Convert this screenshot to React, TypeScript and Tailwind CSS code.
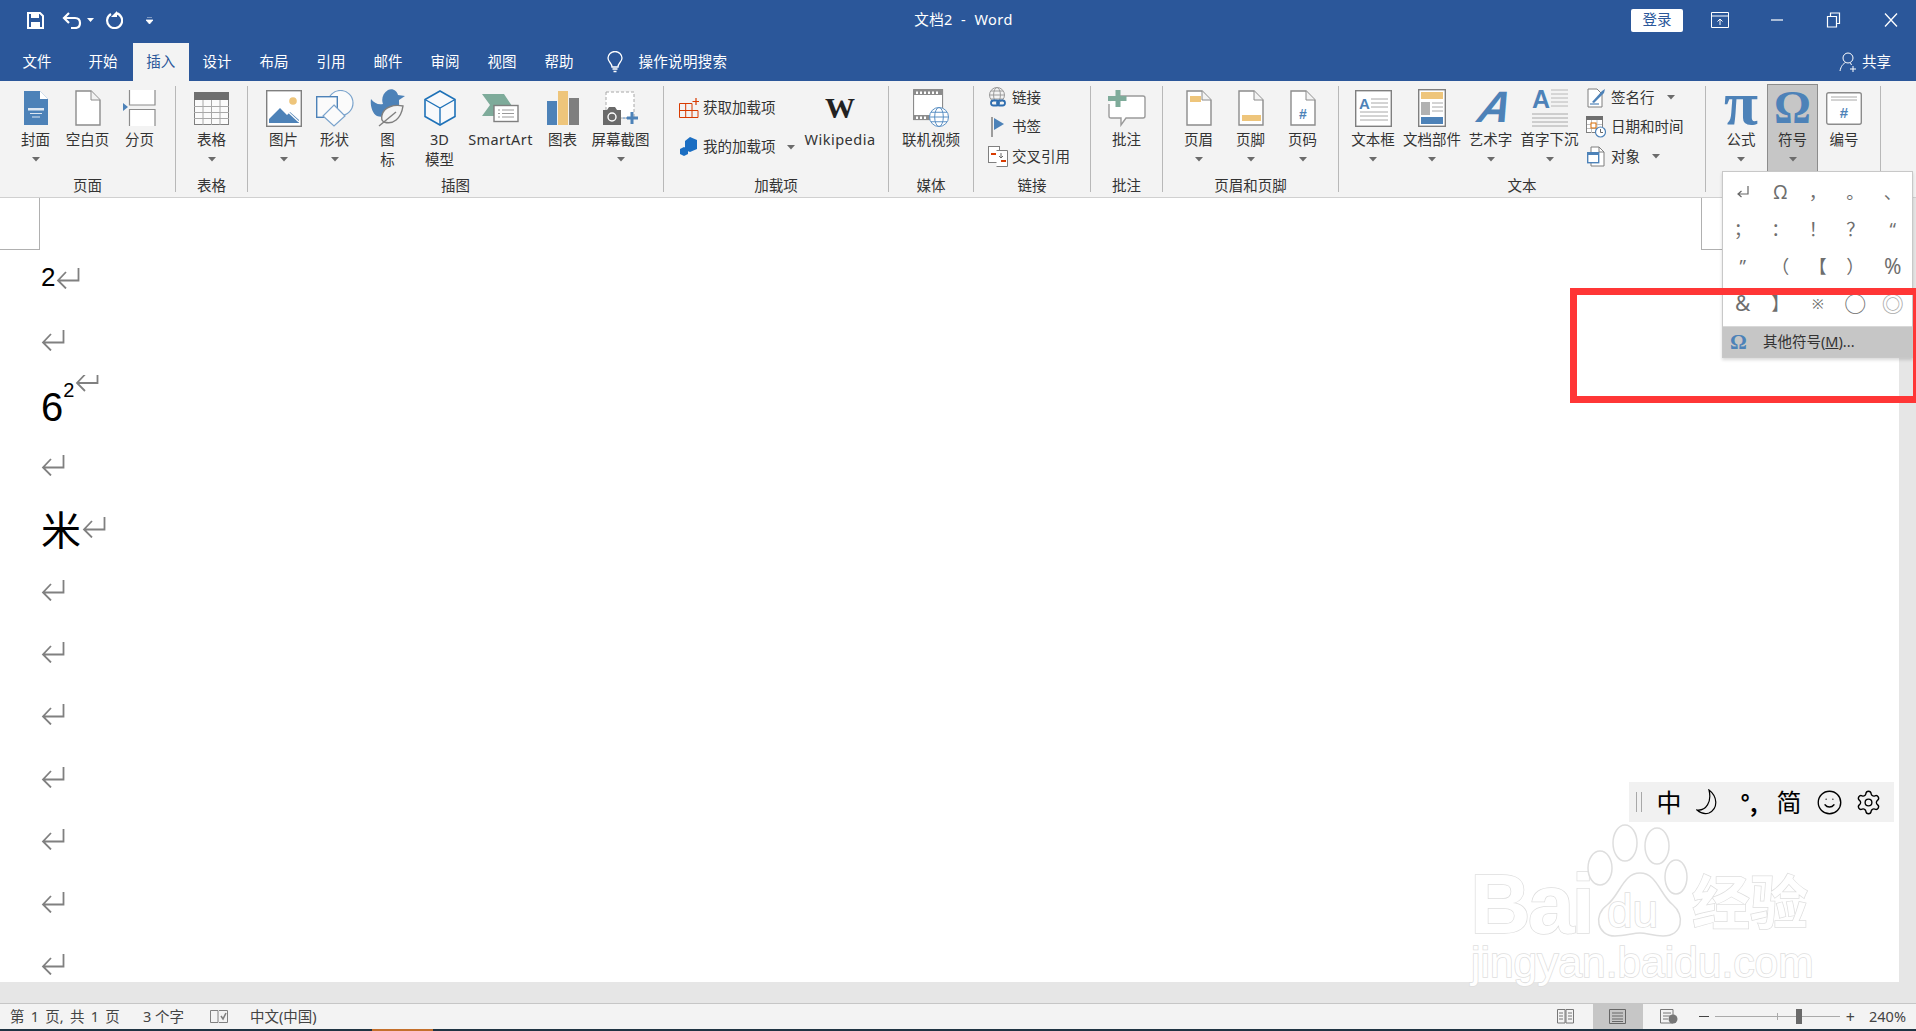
import type { ReactNode } from "react";
import { Settings, Smile } from "lucide-react";

const BLUE = "#4d82b8";
const TAN = "#eec57b";
const GRAY = "#7f7f7f";

function Caret() {
  return (
    <svg width="8" height="5" viewBox="0 0 8 5">
      <path d="M0 0H8L4 4.5Z" fill="#6b6b6b" />
    </svg>
  );
}

function ReturnMark({ h = 21 }: { h?: number }) {
  const y = h === 21 ? 12.5 : 8;
  return (
    <svg width="24" height={h} viewBox={`0 0 24 ${h}`} className="shrink-0">
      <path
        d={`M22.5 0V${y}H2M10 ${y - 8.5}L2 ${y}L10 ${y + 8}`}
        fill="none"
        stroke="#808080"
        strokeWidth="1.8"
      />
    </svg>
  );
}

function DocShape({ children }: { children?: ReactNode }) {
  return (
    <svg width="26" height="36" viewBox="0 0 26 36">
      <path d="M1 1H16L25 10V35H1Z" fill="#fff" stroke="#8c8c8c" strokeWidth="1.4" />
      <path d="M16 1V10H25" fill="#f3f3f3" stroke="#8c8c8c" />
      {children}
    </svg>
  );
}

function CoverIcon() {
  return (
    <svg width="26" height="35" viewBox="0 0 26 35">
      <path d="M1 0H17L25 8V34H1Z" fill={BLUE} />
      <path d="M17 0L25 8H17Z" fill="#fff" />
      <path d="M5 17H21V19.5H5ZM7 22H19V23H7ZM9 25.5H17V26.5H9Z" fill="#dfe8f2" />
    </svg>
  );
}

function BreakIcon() {
  return (
    <svg width="33" height="36" viewBox="0 0 33 36">
      <path d="M6.5 0V15H32V0" fill="#fff" stroke="#8c8c8c" strokeWidth="1.2" />
      <path d="M6.5 36V19.5H32V36" fill="#fff" stroke="#8c8c8c" strokeWidth="1.2" />
      <path d="M0 13L5 17L0 21Z" fill={BLUE} />
    </svg>
  );
}

function TableIcon() {
  return (
    <svg width="35" height="33" viewBox="0 0 35 33">
      <rect x="0.5" y="0.5" width="34" height="32" fill="#fbfbfb" stroke={GRAY} />
      <rect x="0" y="0" width="35" height="8" fill="#6e6e6e" />
      <path d="M0 14.5H35M0 20.5H35M0 26.5H35M9 8V33M17.5 8V33M26 8V33" stroke="#a8a8a8" />
    </svg>
  );
}

function PictureIcon() {
  return (
    <svg width="36" height="37" viewBox="0 0 36 37">
      <rect x="0.7" y="0.7" width="34.6" height="35.6" fill="#fff" stroke={GRAY} strokeWidth="1.4" />
      <circle cx="27" cy="11" r="3.8" fill={TAN} />
      <path d="M3 33V29L14 18L21 25L24 22L33 30V33Z" fill={BLUE} />
      <path d="M20 20L33 32" stroke="#fff" strokeWidth="1.2" />
    </svg>
  );
}

function ShapesIcon() {
  return (
    <svg width="38" height="37" viewBox="0 0 38 37">
      <circle cx="24.5" cy="13" r="12.5" fill="#fbfbfb" stroke="#7aa3cc" strokeWidth="1.2" />
      <rect x="0.7" y="6.7" width="20.6" height="20.6" fill="#fbfbfb" stroke={BLUE} strokeWidth="1.4" />
      <path d="M18 15L29 26L18 36L7 26Z" fill="#fbfbfb" stroke="#7aa3cc" strokeWidth="1.2" />
    </svg>
  );
}

function DuckLeafIcon() {
  return (
    <svg width="36" height="38" viewBox="0 0 36 38">
      <path
        d="M1 10C4 14 8 16 13 15C11 10 13 4 18 1C23-1 27 2 28 6L35 7L29 11C29 16 30 18 26 21C20 27 12 29 7 27C2 24 0 16 1 10Z"
        fill={BLUE}
      />
      <path d="M33 17C24 15 14 18 12 26C11 30 12 32 14 33C23 36 31 30 33 17Z" fill="#f4f4f4" stroke={GRAY} strokeWidth="1.4" />
      <path d="M9 37L26 23" stroke={GRAY} strokeWidth="1.4" />
    </svg>
  );
}

function CubeIcon() {
  return (
    <svg width="32" height="36" viewBox="0 0 32 36">
      <path d="M16 1L31 9.5V26.5L16 35L1 26.5V9.5Z" fill="#f8f9fb" stroke="#1f72b8" strokeWidth="1.6" />
      <path d="M1 9.5L16 18L31 9.5M16 18V35" fill="none" stroke="#1f72b8" strokeWidth="1.4" />
    </svg>
  );
}

function SmartArtIcon() {
  return (
    <svg width="37" height="29" viewBox="0 0 37 29">
      <path d="M0 0H22L32 15L22 22H0L8 11Z" fill="#7eab9a" />
      <rect x="12" y="11.5" width="24" height="16" fill="#fff" stroke={GRAY} strokeWidth="1.4" />
      <path d="M16 16H18M20 16H32M16 19.5H18M20 19.5H32M16 23H18M20 23H32" stroke="#9a9a9a" />
    </svg>
  );
}

function ChartIcon() {
  return (
    <svg width="32" height="34" viewBox="0 0 32 34">
      <rect x="0" y="10" width="10" height="24" fill={BLUE} />
      <rect x="11" y="0" width="10" height="34" fill={TAN} />
      <rect x="22" y="7" width="10" height="27" fill={GRAY} />
    </svg>
  );
}

function ScreenshotIcon() {
  return (
    <svg width="36" height="35" viewBox="0 0 36 35">
      <rect x="3" y="1" width="28" height="26" fill="#fff" stroke="#a8a8a8" strokeDasharray="3 2" />
      <path d="M0 19H4L6 16H12L14 19H18V34H0Z" fill="#6a6a6a" />
      <circle cx="9" cy="26" r="4" fill="#6a6a6a" stroke="#fff" strokeWidth="1.4" />
      <path d="M20 27H25" stroke={BLUE} strokeDasharray="2 1" />
      <path d="M29 21V33M24 27H35" stroke={BLUE} strokeWidth="3" />
    </svg>
  );
}

function GetAddinIcon() {
  return (
    <svg width="20" height="20" viewBox="0 0 20 20">
      <path d="M.5 5.5H13V19.5H.5ZM.5 12.5H13M6.7 5.5V19.5M13 12.5H19V19.5H13" fill="none" stroke="#d83b01" />
      <path d="M17 0V7M13.5 3.5H20.5" stroke="#d83b01" strokeWidth="1.2" />
    </svg>
  );
}

function MyAddinIcon() {
  return (
    <svg width="18" height="20" viewBox="0 0 18 20">
      <path d="M10 0L17 3V12L10 15L5 13V4Z" fill="#1b6ec2" />
      <path d="M4 10L8 12V17L4 19L0 17V12Z" fill="#1b6ec2" />
    </svg>
  );
}

function Globe({ x, y, r }: { x: number; y: number; r: number }) {
  return (
    <g fill="#fff" stroke="#5b90c4" strokeWidth="1">
      <circle cx={x} cy={y} r={r} />
      <ellipse cx={x} cy={y} rx={r / 2.2} ry={r} fill="none" />
      <path d={`M${x - r} ${y}H${x + r}M${x - r + 1.5} ${y - r / 2}H${x + r - 1.5}M${x - r + 1.5} ${y + r / 2}H${x + r - 1.5}`} fill="none" />
    </g>
  );
}

function VideoIcon() {
  return (
    <svg width="36" height="38" viewBox="0 0 36 38">
      <rect x="0.6" y="0.6" width="29" height="30" fill="#fff" stroke={GRAY} />
      <path d="M1 1H29V6H1ZM1 26H29V31H1Z" fill="#8c8c8c" />
      <path d="M4 2.5V5M8 2.5V5M12 2.5V5M16 2.5V5M20 2.5V5M24 2.5V5M4 27.5V30M8 27.5V30M12 27.5V30" stroke="#fff" strokeWidth="2" />
      <Globe x={26} y={28} r={9.5} />
    </svg>
  );
}

function LinkIcon() {
  return (
    <svg width="20" height="21" viewBox="0 0 20 21">
      <g fill="none" stroke="#9a9a9a">
        <circle cx="9" cy="8" r="7.5" />
        <ellipse cx="9" cy="8" rx="3.4" ry="7.5" />
        <path d="M1.5 8H16.5M3 4H15M3 12H15" />
      </g>
      <rect x="3" y="13.5" width="8" height="5" rx="2.5" fill="#f3f3f3" stroke="#2f6eb0" strokeWidth="1.8" />
      <rect x="9" y="13.5" width="8" height="5" rx="2.5" fill="none" stroke="#2f6eb0" strokeWidth="1.8" />
    </svg>
  );
}

function BookmarkIcon() {
  return (
    <svg width="14" height="20" viewBox="0 0 14 20">
      <path d="M1 0V20" stroke={GRAY} strokeWidth="1.5" />
      <path d="M3 1L13 7L3 13Z" fill={BLUE} />
    </svg>
  );
}

function CrossRefIcon() {
  return (
    <svg width="20" height="21" viewBox="0 0 20 21">
      <rect x="0.5" y="0.5" width="11" height="16" fill="#fff" stroke={GRAY} />
      <path d="M8.5 4.5H19.5V20.5H8.5" fill="#fff" stroke={GRAY} />
      <path d="M3 8H8M13 15H18" stroke="#d83b01" strokeWidth="2" />
      <path d="M13 7V12M11 10L13 12L15 10" fill="none" stroke="#6a6a6a" />
    </svg>
  );
}

function CommentIcon() {
  return (
    <svg width="38" height="37" viewBox="0 0 38 37">
      <path d="M8 6H35Q37 6 37 8V26Q37 28 35 28H18L13 35V28H3Q1 28 1 26V14" fill="#fff" stroke="#9a9a9a" strokeWidth="1.4" />
      <path d="M7.5 0H12.5V6H18.5V11H12.5V17H7.5V11H0V6H7.5Z" fill="#7eab9a" />
    </svg>
  );
}

function WordArtIcon() {
  return (
    <svg width="36" height="40" viewBox="0 0 36 40">
      <text
        x="18"
        y="34"
        textAnchor="middle"
        transform="skewX(-14) translate(9 0)"
        fontFamily="Liberation Sans"
        fontWeight="700"
        fontStyle="italic"
        fontSize="44"
        fill={BLUE}
      >
        A
      </text>
    </svg>
  );
}

function TextBoxIcon() {
  return (
    <svg width="37" height="37" viewBox="0 0 37 37">
      <rect x="0.7" y="0.7" width="35.6" height="35.6" fill="#fff" stroke={GRAY} strokeWidth="1.4" />
      <text x="4" y="19" fontFamily="Liberation Sans" fontWeight="700" fontSize="15" fill={BLUE}>
        A
      </text>
      <path d="M16 9H33M16 13H33M16 17H33M5 22H33M5 26H33M5 30H33" stroke="#a8a8a8" />
    </svg>
  );
}

function QuickPartsIcon() {
  return (
    <svg width="28" height="38" viewBox="0 0 28 38">
      <rect x="0.7" y="0.7" width="26.6" height="36.6" fill="#fff" stroke={GRAY} strokeWidth="1.4" />
      <rect x="3" y="3" width="22" height="7" fill={TAN} />
      <rect x="3" y="13" width="9" height="13" fill="#b2b2b2" />
      <path d="M14 14H25M14 18H25M14 22H25" stroke="#a8a8a8" />
      <rect x="3" y="28" width="22" height="7" fill={BLUE} />
    </svg>
  );
}

function DropCapIcon() {
  return (
    <svg width="36" height="38" viewBox="0 0 36 38">
      <text x="0" y="19" fontFamily="Liberation Sans" fontWeight="700" fontSize="25" fill={BLUE}>
        A
      </text>
      <path d="M19 1H36M19 5H36M19 9H36M19 13H36M19 17H36" stroke="#b8b8b8" />
      <path d="M0 25H36M0 29H36M0 33H36M0 37H36" stroke="#a8a8a8" />
    </svg>
  );
}

function SignatureIcon() {
  return (
    <svg width="19" height="20" viewBox="0 0 19 20">
      <path d="M1 1H10L15 6V19H1Z" fill="#fff" stroke={GRAY} />
      <path d="M3 16H12" stroke={BLUE} strokeWidth="1.2" />
      <path d="M5 14L15 3L18 1L17 5L7 15Z" fill={BLUE} />
    </svg>
  );
}

function DateIcon() {
  return (
    <svg width="20" height="22" viewBox="0 0 20 22">
      <rect x="0.5" y="0.5" width="16" height="16" fill="#fff" stroke={GRAY} />
      <rect x="0" y="0" width="17" height="4" fill="#6e6e6e" />
      <path d="M1 8.5H16M1 12.5H16M5.5 4V17M11 4V17" stroke="#c0c0c0" />
      <rect x="5" y="7" width="5" height="5" fill="#fff" stroke="#d86b01" />
      <circle cx="14.5" cy="16" r="5" fill="#fff" stroke={BLUE} strokeWidth="1.2" />
      <path d="M14.5 13V16.5H17" fill="none" stroke="#6a6a6a" />
    </svg>
  );
}

function ObjectIcon() {
  return (
    <svg width="18" height="21" viewBox="0 0 18 21">
      <path d="M4 1H12L17 6V20H4Z" fill="#fff" stroke={GRAY} />
      <path d="M12 1V6H17" fill="none" stroke={GRAY} />
      <rect x="0.7" y="6.7" width="11" height="10" fill="#fff" stroke={BLUE} strokeWidth="1.4" />
      <path d="M1 7H11V9H1Z" fill={BLUE} />
    </svg>
  );
}

function NumberingIcon() {
  return (
    <svg width="36" height="33" viewBox="0 0 36 33">
      <rect x="0.7" y="0.7" width="34.6" height="31.6" rx="2" fill="#fff" stroke="#8c8c8c" strokeWidth="1.4" />
      <path d="M5 5H31M5 8H31" stroke="#a8a8a8" />
      <text x="18" y="26" textAnchor="middle" fontFamily="Liberation Sans" fontWeight="700" fontSize="15" fill={BLUE}>
        #
      </text>
    </svg>
  );
}

function Btn({
  w,
  icon,
  label,
  caret,
  active,
}: {
  w: string;
  icon: ReactNode;
  label: ReactNode;
  caret?: boolean;
  active?: boolean;
}) {
  return (
    <div
      className={`flex shrink-0 flex-col items-center text-center ${w} ${
        active ? "mt-[3px] h-[88px] border border-[#8c8c8c] bg-[#c6c6c6] pt-[2px]" : "pt-[6px]"
      }`}
    >
      <div className="flex h-[42px] items-center justify-center">{icon}</div>
      <div className="leading-[20px] whitespace-nowrap">{label}</div>
      {caret && (
        <div className="flex h-[20px] items-center justify-center">
          <Caret />
        </div>
      )}
    </div>
  );
}

function Row({ icon, label, caret, iconW = "w-[20px]", gap = "mr-[4px]" }: { icon: ReactNode; label: string; caret?: string; iconW?: string; gap?: string }) {
  return (
    <div className="flex h-[29.5px] items-center whitespace-nowrap">
      <div className={`flex shrink-0 items-center justify-center ${iconW} ${gap}`}>{icon}</div>
      <span>{label}</span>
      {caret && (
        <span className={`flex items-center ${caret}`}>
          <Caret />
        </span>
      )}
    </div>
  );
}

function Group({ w, label, className = "justify-center", children }: { w: string; label: string; className?: string; children: ReactNode }) {
  return (
    <div className={`flex h-full shrink-0 flex-col ${w}`}>
      <div className={`flex h-[93px] ${className}`}>{children}</div>
      <div className="h-[23px] text-center leading-[23px]">{label}</div>
    </div>
  );
}

function Sep() {
  return <div className="mt-[5px] h-[106px] w-px shrink-0 bg-[#b8b8b8]" />;
}

const tabs = ["设计", "布局", "引用", "邮件", "审阅", "视图", "帮助"];

const symbols = [
  { s: "Ω", c: "text-[19px]" },
  { s: "，", c: "" },
  { s: "。", c: "" },
  { s: "、", c: "" },
  { s: "；", c: "" },
  { s: "：", c: "" },
  { s: "！", c: "" },
  { s: "？", c: "" },
  { s: "“", c: "" },
  { s: "”", c: "" },
  { s: "（", c: "" },
  { s: "【", c: "" },
  { s: "）", c: "" },
  { s: "%", c: "text-[21px]" },
  { s: "&", c: "text-[21px]" },
  { s: "】", c: "" },
  { s: "※", c: "text-[14px]" },
  { s: "○", c: "text-[22px]" },
  { s: "◎", c: "text-[22px] text-[#aaa]" },
];

function SymbolMenu() {
  return (
    <div className="absolute top-[171px] left-[1722px] h-[187px] w-[191px] border border-[#c8c8c8] bg-white pt-[2px] shadow-[0_2px_3px_rgba(0,0,0,0.15)]">
      <div className="grid grid-cols-[repeat(5,37.5px)] grid-rows-[repeat(4,37px)] pl-px text-[18px] text-[#6e6e6e]">
        <div className="flex items-center justify-center">
          <svg width="13" height="13" viewBox="0 0 13 13">
            <path d="M12 0V8H2M5.5 5L2 8L5.5 11" fill="none" stroke="#666" strokeWidth="1.2" />
          </svg>
        </div>
        {symbols.map(({ s, c }) => (
          <div key={s} className={`flex items-center justify-center ${c}`}>
            {s}
          </div>
        ))}
      </div>
      <div className="mt-[4px] h-px bg-[#d8d8d8]" />
      <div className="flex h-[30px] items-center bg-[#c6c6c6] pl-[7px] text-[#333]">
        <span className="w-[33px] font-['Liberation_Serif'] text-[21px] leading-none font-bold text-[#4d82b8]">Ω</span>
        <span>
          其他符号(<span className="underline">M</span>)...
        </span>
      </div>
    </div>
  );
}

function Watermark() {
  const outline = "text-white [-webkit-text-stroke:1.5px_#dedede] [paint-order:stroke_fill]";
  return (
    <div className="pointer-events-none absolute inset-0 z-10">
      <span className={`absolute top-[664px] left-[1470px] font-['Liberation_Sans'] text-[84px] leading-none font-bold tracking-[-3px] ${outline}`}>Bai</span>
      <svg width="110" height="120" viewBox="0 0 110 120" className="absolute top-[625px] left-[1585px]">
        <g fill="#fff" stroke="#dedede" strokeWidth="1.5">
          <ellipse cx="15" cy="45" rx="12" ry="17" />
          <ellipse cx="40" cy="20" rx="12" ry="18" />
          <ellipse cx="72" cy="23" rx="12" ry="18" />
          <ellipse cx="91" cy="54" rx="11" ry="17" />
          <path d="M55 50C72 50 75 72 88 82C100 92 98 113 78 113C68 113 62 110 55 110C48 110 40 113 30 113C12 113 8 92 22 82C35 72 38 50 55 50Z" />
        </g>
      </svg>
      <span className={`absolute top-[690px] left-[1607px] font-['Liberation_Sans'] text-[46px] leading-none ${outline}`}>du</span>
      <span className={`absolute top-[672px] left-[1692px] font-['Noto_Sans_CJK_SC'] text-[58px] leading-none font-bold ${outline}`}>经验</span>
      <span className={`absolute top-[744px] left-[1471px] font-['Liberation_Sans'] text-[42.5px] leading-none ${outline}`}>jingyan.baidu.com</span>
    </div>
  );
}

function ImeBar() {
  return (
    <div className="absolute top-[584px] left-[1629px] z-20 flex h-[40px] w-[265px] items-center bg-[#f1f1f1] text-black">
      <div className="mr-[8px] ml-[7px] h-[20px] w-[6px] border-x border-[#a8a8a8]" />
      <span className="w-[38px] text-center text-[25px] leading-none">中</span>
      <span className="flex w-[42px] justify-center">
        <svg width="26" height="26" viewBox="0 0 26 26">
          <path d="M13 1C21 7 23 19 13 24C9 25.500 5 24.500 1 21C10 22 16 13 13 1Z" fill="none" stroke="#000" strokeWidth="1.2" />
        </svg>
      </span>
      <span className="w-[38px] text-center font-['Noto_Sans_CJK_SC'] text-[23px] leading-none font-bold">°,</span>
      <span className="w-[42px] text-center text-[25px] leading-none">简</span>
      <span className="flex w-[39px] justify-center">
        <Smile size={27} strokeWidth={1.2} />
      </span>
      <span className="flex w-[39px] justify-center">
        <Settings size={27} strokeWidth={1.2} />
      </span>
    </div>
  );
}

export default function App() {
  return (
    <div className="relative flex h-[1031px] w-[1916px] flex-col overflow-hidden bg-white font-['Noto_Sans','Noto_Sans_CJK_SC',sans-serif] text-[14.5px] text-[#333]">
      {/* title bar */}
      <div className="h-[81px] shrink-0 bg-[#2b579a] text-white">
        <div className="flex h-[43px] items-center pb-[3px]">
          <div className="flex flex-1 items-center pl-[27px]">
            <svg width="17" height="17" viewBox="0 0 17 17">
              <path d="M1 1H13L16 4V16H1Z" fill="none" stroke="#fff" strokeWidth="2" />
              <path d="M4 1H12V6H4ZM4 10H13V16H4Z" fill="#fff" />
            </svg>
            <svg width="20" height="17" viewBox="0 0 20 17" className="ml-[18px]">
              <path d="M2 6H13Q18 6 18 11T13 16H9M7 1L2 6L7 11" fill="none" stroke="#fff" strokeWidth="2.2" />
            </svg>
            <svg width="7" height="4" viewBox="0 0 7 4" className="ml-[5px]">
              <path d="M0 0H7L3.5 4Z" fill="#fff" />
            </svg>
            <svg width="18" height="18" viewBox="0 0 18 18" className="ml-[11px]">
              <path d="M6 3A7.5 7.5 0 1 0 11 2.2" fill="none" stroke="#fff" strokeWidth="2.2" />
              <path d="M12 0V6H6Z" fill="#fff" />
            </svg>
            <svg width="7" height="7" viewBox="0 0 7 7" className="ml-[23px]">
              <path d="M1 0H6M0 3H7L3.5 7Z" stroke="#fff" strokeWidth="0.8" fill="#fff" />
            </svg>
          </div>
          <div className="tracking-[0.4px] whitespace-pre">文档2  -  Word</div>
          <div className="flex flex-1 items-center justify-end pr-[16px]">
            <div className="mr-[28px] flex h-[23px] w-[52px] items-center justify-center rounded-[2px] bg-white text-[#2b579a]">登录</div>
            <div className="flex items-center gap-[39px]">
              <svg width="18" height="16" viewBox="0 0 18 16">
                <path d="M.5 .5H17.5V15.5H.5ZM1 4H17" fill="none" stroke="#fff" />
                <path d="M9 13V7M6.5 9.5L9 7L11.5 9.5" fill="none" stroke="#fff" />
              </svg>
              <svg width="18" height="16" viewBox="0 0 18 16">
                <path d="M3 8H15" stroke="#fff" strokeWidth="1.2" />
              </svg>
              <svg width="18" height="16" viewBox="0 0 18 16">
                <path d="M2.5 4.5H11.5V15H2.5ZM5.5 4V1H14.5V11.5H12" fill="none" stroke="#fff" strokeWidth="1.2" />
              </svg>
              <svg width="18" height="16" viewBox="0 0 18 16">
                <path d="M3 1.5L15 14.5M15 1.5L3 14.5" stroke="#fff" strokeWidth="1.3" />
              </svg>
            </div>
          </div>
        </div>
        <div className="flex h-[38px] items-center">
          <div className="w-[74px] text-center">文件</div>
          <div className="w-[58px] text-center">开始</div>
          <div className="ml-px flex h-full w-[55.5px] items-center justify-center bg-[#f3f3f3] text-[#2b579a]">插入</div>
          {tabs.map((t) => (
            <div key={t} className="w-[57px] text-center">
              {t}
            </div>
          ))}
          <svg width="18" height="22" viewBox="0 0 18 22" className="mr-[15px] ml-[18px]">
            <path d="M6 16C6 12 2 11 2 7A7 6.5 0 0 1 16 7C16 11 12 12 12 16Z" fill="none" stroke="#fff" strokeWidth="1.3" />
            <path d="M6.5 18H11.5M7.5 20.5H10.5" stroke="#fff" strokeWidth="1.3" />
          </svg>
          <div className="tracking-[0.3px]">操作说明搜索</div>
          <div className="ml-auto flex items-center pr-[25px]">
            <svg width="18" height="22" viewBox="0 0 18 22">
              <circle cx="9" cy="7" r="5" fill="none" stroke="#fff" />
              <path d="M1 20C2 15 4 13 6.500 11.500M11 12.500L13 13.500M14 15V21M11 18H17" fill="none" stroke="#fff" />
            </svg>
            <span className="ml-[5px]">共享</span>
          </div>
        </div>
      </div>

      {/* ribbon */}
      <div className="flex h-[117px] shrink-0 border-b border-[#d0d0d0] bg-[#f3f3f3]">
        <Group w="w-[175px]" label="页面">
          <Btn w="w-[52px]" icon={<CoverIcon />} label="封面" caret />
          <Btn w="w-[52px]" icon={<DocShape />} label="空白页" />
          <Btn w="w-[52px]" icon={<BreakIcon />} label="分页" />
        </Group>
        <Sep />
        <Group w="w-[71px]" label="表格">
          <Btn w="w-[52px]" icon={<TableIcon />} label="表格" caret />
        </Group>
        <Sep />
        <Group w="w-[415px]" label="插图">
          <Btn w="w-[52px]" icon={<PictureIcon />} label="图片" caret />
          <Btn w="w-[50px]" icon={<ShapesIcon />} label="形状" caret />
          <Btn
            w="w-[56px]"
            icon={<DuckLeafIcon />}
            label={
              <>
                图
                <br />标
              </>
            }
          />
          <Btn
            w="w-[48px]"
            icon={<CubeIcon />}
            label={
              <>
                3D
                <br />模型
              </>
            }
          />
          <Btn w="w-[74px]" icon={<SmartArtIcon />} label={<span className="tracking-[0.4px]">SmartArt</span>} />
          <Btn w="w-[50px]" icon={<ChartIcon />} label="图表" />
          <Btn w="w-[66px]" icon={<ScreenshotIcon />} label="屏幕截图" caret />
        </Group>
        <Sep />
        <Group w="w-[224px]" label="加载项" className="justify-start">
          <div className="flex h-full w-[139px] flex-col pt-[12px] pl-[15px]">
            <div className="h-[39.5px]">
              <Row icon={<GetAddinIcon />} label="获取加载项" />
            </div>
            <Row icon={<MyAddinIcon />} label="我的加载项" caret="ml-[11px]" />
          </div>
          <Btn
            w="w-[74px]"
            icon={<span className="font-['Liberation_Serif'] text-[30px] leading-none font-bold text-[#222]">W</span>}
            label={<span className="tracking-[0.5px]">Wikipedia</span>}
          />
        </Group>
        <Sep />
        <Group w="w-[84px]" label="媒体">
          <Btn w="w-[66px]" icon={<VideoIcon />} label="联机视频" />
        </Group>
        <Sep />
        <Group w="w-[116px]" label="链接" className="justify-start">
          <div className="flex flex-col pt-[2px] pl-[14px]">
            <Row icon={<LinkIcon />} label="链接" />
            <Row icon={<BookmarkIcon />} label="书签" />
            <Row icon={<CrossRefIcon />} label="交叉引用" />
          </div>
        </Group>
        <Sep />
        <Group w="w-[71px]" label="批注">
          <Btn w="w-[52px]" icon={<CommentIcon />} label="批注" />
        </Group>
        <Sep />
        <Group w="w-[175px]" label="页眉和页脚">
          <Btn
            w="w-[52px]"
            icon={
              <DocShape>
                <rect x="4" y="6" width="11" height="6" fill={TAN} />
              </DocShape>
            }
            label="页眉"
            caret
          />
          <Btn
            w="w-[52px]"
            icon={
              <DocShape>
                <rect x="4" y="25" width="19" height="6" fill={TAN} />
              </DocShape>
            }
            label="页脚"
            caret
          />
          <Btn
            w="w-[52px]"
            icon={
              <DocShape>
                <text x="13" y="29" textAnchor="middle" fontFamily="Liberation Sans" fontWeight="700" fontSize="14" fill={BLUE}>
                  #
                </text>
              </DocShape>
            }
            label="页码"
            caret
          />
        </Group>
        <Sep />
        <Group w="w-[366px]" label="文本" className="justify-start pl-[4px]">
          <Btn w="w-[60px]" icon={<TextBoxIcon />} label="文本框" caret />
          <Btn w="w-[58px]" icon={<QuickPartsIcon />} label="文档部件" caret />
          <Btn w="w-[59px]" icon={<WordArtIcon />} label="艺术字" caret />
          <Btn w="w-[59px]" icon={<DropCapIcon />} label="首字下沉" caret />
          <div className="flex flex-col pt-[2px] pl-[7px]">
            <Row icon={<SignatureIcon />} label="签名行" caret="ml-[12px]" gap="mr-[5px]" />
            <Row icon={<DateIcon />} label="日期和时间" gap="mr-[5px]" />
            <Row icon={<ObjectIcon />} label="对象" caret="ml-[12px]" gap="mr-[5px]" />
          </div>
        </Group>
        <Sep />
        <Group w="w-[174px]" label="" className="justify-start pl-[9px]">
          <Btn
            w="w-[52px]"
            icon={<span className="-mt-[10px] font-['Liberation_Serif'] text-[62px] leading-[42px] font-bold text-[#4d82b8]">π</span>}
            label="公式"
            caret
          />
          <Btn
            w="w-[51px]"
            active
            icon={<span className="font-['Liberation_Serif'] text-[46px] leading-none font-bold text-[#4d82b8]">Ω</span>}
            label="符号"
            caret
          />
          <Btn w="w-[52px]" icon={<NumberingIcon />} label="编号" />
        </Group>
        <Sep />
      </div>

      {/* document */}
      <div className="flex min-h-0 flex-1">
        <div className="relative flex-1 bg-white pt-[49px] pl-[41px] text-black">
          <div className="absolute top-0 left-0 h-[52px] w-[40px] border-r border-b border-[#b0b0b0]" />
          <div className="absolute top-0 left-[1701px] h-[52px] w-[30px] border-b border-l border-[#b0b0b0]" />

          <div className="flex h-[62.4px] items-center">
            <span className="-mt-[2px] font-['Liberation_Sans'] text-[26px] leading-none">2</span>
            <span className="ml-px">
              <ReturnMark />
            </span>
          </div>
          <div className="flex h-[62.4px] items-center">
            <ReturnMark />
          </div>
          <div className="flex h-[62.4px] items-center">
            <span className="mt-[8px] font-['Liberation_Sans'] text-[40px] leading-none">6</span>
            <span className="mb-[26px] ml-0 font-['Liberation_Sans'] text-[20px] leading-none font-light">2</span>
            <span className="mb-[38px] ml-[1px]">
              <ReturnMark h={17} />
            </span>
          </div>
          <div className="flex h-[62.4px] items-center">
            <ReturnMark />
          </div>
          <div className="flex h-[62.4px] items-center">
            <span className="font-['Noto_Sans_CJK_SC'] text-[40px] leading-none">米</span>
            <span className="ml-[1px]">
              <ReturnMark />
            </span>
          </div>
          {[0, 1, 2, 3, 4, 5, 6].map((i) => (
            <div key={i} className="flex h-[62.4px] items-center">
              <ReturnMark />
            </div>
          ))}
          <Watermark />
          <ImeBar />
        </div>
        <div className="w-[17px] shrink-0 bg-[#e6e6e6]" />
      </div>

      {/* status bar */}
      <div className="h-[21px] shrink-0 bg-[#e6e6e6]" />
      <div className="flex h-[26px] shrink-0 items-center border-t border-[#c6c6c6] bg-[#f3f3f3] text-[14.5px] text-[#444]">
        <span className="ml-[10px] w-[133px] whitespace-pre [word-spacing:2.5px]">第 1 页, 共 1 页</span>
        <span className="w-[67px] whitespace-pre">3 个字</span>
        <svg width="18" height="16" viewBox="0 0 18 16">
          <path d="M8 1.500H.5V13.500H8V1.500M9 1.500H17.500V13.500H9" fill="none" stroke="#808080" />
          <path d="M11 7L13 10L16 4" fill="none" stroke="#808080" strokeWidth="1.6" />
        </svg>
        <span className="ml-[22px]">中文(中国)</span>
        <div className="ml-auto flex h-full items-center">
          <svg width="17" height="15" viewBox="0 0 17 15" className="mr-[19px]">
            <path d="M.5 .5H8V14H.5ZM9 .5H16.500V14H9ZM2 4H6M2 7H6M2 10H6M11 4H15M11 7H15M11 10H15" fill="none" stroke="#777" />
          </svg>
          <div className="flex h-full w-[50px] items-center justify-center bg-[#c6c6c6]">
            <svg width="17" height="15" viewBox="0 0 17 15">
              <path d="M.5 .5H16.500V14.500H.5ZM3 4H14M3 7H14M3 10H14M3 12.500H14" fill="none" stroke="#666" />
            </svg>
          </div>
          <svg width="18" height="15" viewBox="0 0 18 15" className="ml-[17px]">
            <path d="M.5 .5H13V14H.5ZM3 4H11M3 7H11M3 10H8" fill="#f3f3f3" stroke="#777" />
            <circle cx="13" cy="10" r="4.500" fill="#777" />
          </svg>
          <span className="ml-[21px] h-px w-[10px] bg-[#444]" />
          <div className="relative ml-[6px] h-px w-[125px] bg-[#aaa]">
            <span className="absolute top-[-3px] left-[62px] h-[7px] w-px bg-[#aaa]" />
            <span className="absolute top-[-7px] left-[81px] h-[15px] w-[6px] bg-[#6a6a6a]" />
          </div>
          <span className="ml-[6px] text-[16px] leading-none">+</span>
          <span className="mr-[7px] ml-[14px] w-[40px] whitespace-nowrap">240%</span>
        </div>
      </div>
      <div className="flex h-[2px] shrink-0 bg-[#1f3443]">
        <span className="ml-[372px] w-[61px] bg-[#c4702c]" />
      </div>

      <SymbolMenu />
      <div className="pointer-events-none absolute top-[288px] left-[1570px] z-30 h-[115px] w-[346px] border-[7px] border-r-[3px] border-[#ff3636]" />
    </div>
  );
}
